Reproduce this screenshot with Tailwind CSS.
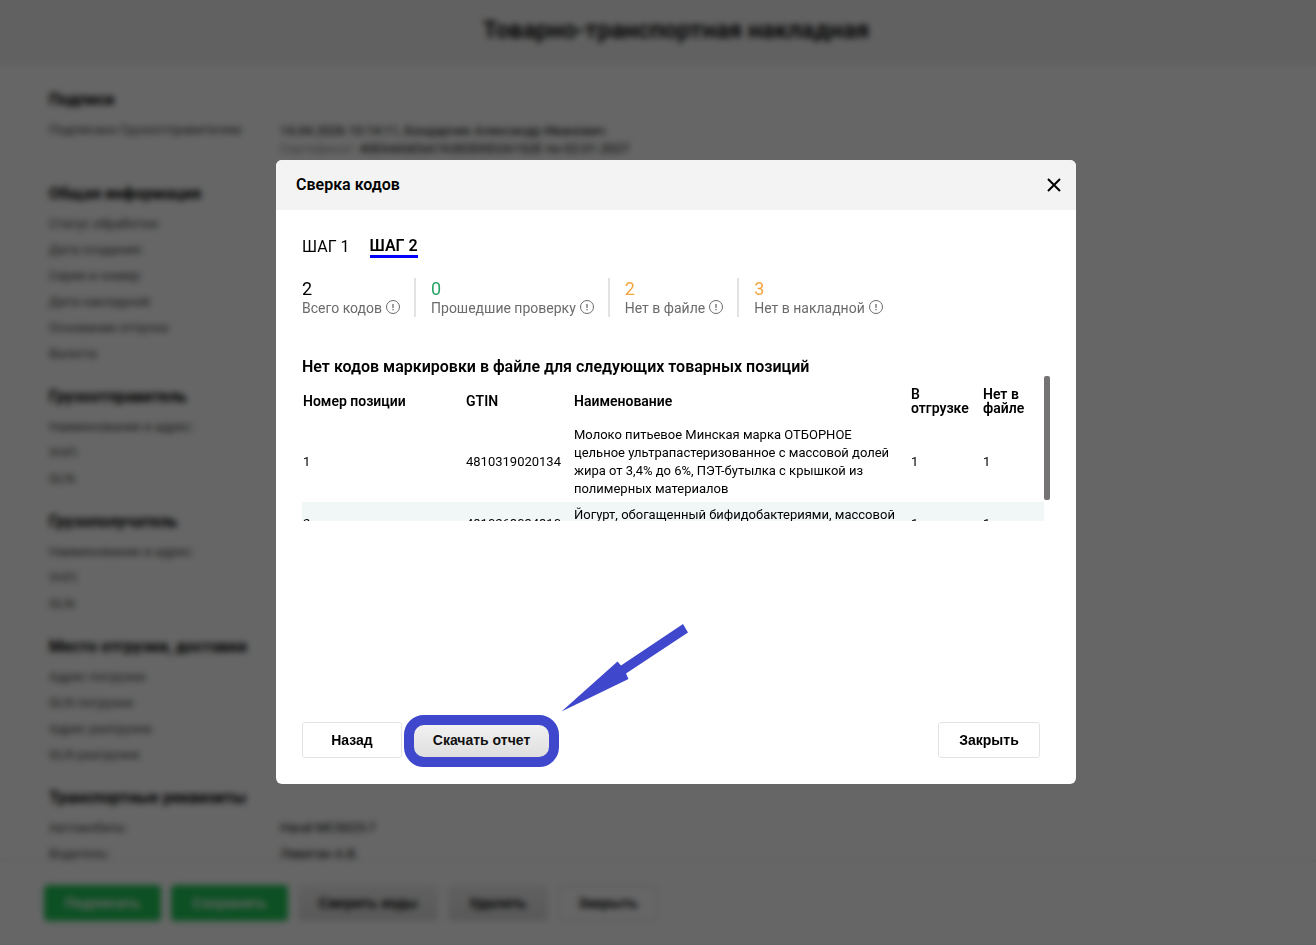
<!DOCTYPE html>
<html lang="ru">
<head>
  <meta charset="UTF-8" />
  <meta name="viewport" content="width=device-width, initial-scale=1" />
  <title>Товарно-транспортная накладная</title>
  <script src="https://cdn.jsdelivr.net/npm/@tailwindcss/browser@4"></script>
</head>
<body class="bg-white text-black font-['Roboto',sans-serif] overflow-hidden">

  <!-- Накладная -->
  <div class="flex flex-col h-screen" aria-hidden="true">
    <header class="flex-none flex items-center justify-center h-[66px] pl-9 pb-1.5 bg-[#f3f3f3]">
      <h1 class="text-2xl font-semibold">Товарно-транспортная накладная</h1>
    </header>

    <main class="flex-1 min-h-0 overflow-hidden pl-[49px] pt-5 flex flex-col gap-4 text-[13px] leading-[18px]">
      <section class="flex-none pb-[3px]">
        <h2 class="text-base leading-7 font-bold mb-[3px]">Подписи</h2>
        <dl class="grid grid-cols-[231px_1fr]">
          <dt class="py-1 text-[#444]">Подписано Грузоотправителем:</dt>
          <dd class="py-[5px]">14.04.2026 10:14:11, Бондарчик Александр Иванович<br /><span class="text-[#999]">Сертификат:</span> 40E64A6E6A7A3E0D0D2A1S2E по 02.01.2027</dd>
        </dl>
      </section>

      <section class="flex-none -mt-0.5">
        <h2 class="text-base leading-7 font-bold mb-[3px]">Общая информация</h2>
        <dl class="text-[#444]">
          <dt class="py-1">Статус обработки:</dt>
          <dt class="py-1">Дата создания:</dt>
          <dt class="py-1">Серия и номер:</dt>
          <dt class="py-1">Дата накладной:</dt>
          <dt class="py-1">Основание отпуска:</dt>
          <dt class="py-1">Валюта:</dt>
        </dl>
      </section>

      <section class="flex-none">
        <h2 class="text-base leading-7 font-bold mb-[3px]">Грузоотправитель</h2>
        <dl class="text-[#444]">
          <dt class="py-1">Наименование и адрес:</dt>
          <dt class="py-1">УНП:</dt>
          <dt class="py-1">GLN:</dt>
        </dl>
      </section>

      <section class="flex-none">
        <h2 class="text-base leading-7 font-bold mb-[3px]">Грузополучатель</h2>
        <dl class="text-[#444]">
          <dt class="py-1">Наименование и адрес:</dt>
          <dt class="py-1">УНП:</dt>
          <dt class="py-1">GLN:</dt>
        </dl>
      </section>

      <section class="flex-none">
        <h2 class="text-base leading-7 font-bold mb-[3px]">Место отгрузки, доставки</h2>
        <dl class="text-[#444]">
          <dt class="py-1">Адрес погрузки:</dt>
          <dt class="py-1">GLN погрузки:</dt>
          <dt class="py-1">Адрес разгрузки:</dt>
          <dt class="py-1">GLN разгрузки:</dt>
        </dl>
      </section>

      <section class="flex-none">
        <h2 class="text-base leading-7 font-bold mb-[3px]">Транспортные реквизиты</h2>
        <dl class="grid grid-cols-[231px_1fr]">
          <dt class="py-1 text-[#444]">Автомобиль:</dt>
          <dd class="py-1">Haval MC5025-7</dd>
          <dt class="py-1 text-[#444]">Водитель:</dt>
          <dd class="py-1">Левитан А.В.</dd>
        </dl>
      </section>
    </main>

    <footer class="flex-none flex items-start gap-2.5 h-[85px] pl-11 pt-6 bg-white border-t border-[#e3e3e3] font-['Liberation_Sans',sans-serif] text-sm font-bold">
      <button type="button" tabindex="-1" class="h-9 w-[117px] rounded bg-[#20c858] text-white">Подписать</button>
      <button type="button" tabindex="-1" class="h-9 w-[117px] rounded bg-[#20c858] text-white">Сохранить</button>
      <button type="button" tabindex="-1" class="h-9 w-[140px] rounded bg-linear-to-b from-[#f0f0f0] to-[#dedede]">Сверить коды</button>
      <button type="button" tabindex="-1" class="h-9 w-[100px] rounded bg-linear-to-b from-[#f0f0f0] to-[#dedede]">Удалить</button>
      <button type="button" tabindex="-1" class="h-9 w-[100px] rounded bg-white border border-[#d8d8d8]">Закрыть</button>
    </footer>
  </div>

  <!-- Окно сверки кодов -->
  <div class="fixed inset-0 flex items-center justify-center pl-9 pb-px bg-black/60 backdrop-blur-[3px]">
    <div role="dialog" aria-labelledby="dialogTitle" class="flex flex-col w-[800px] h-[624px] rounded-md bg-white overflow-hidden">
      <header class="flex items-center justify-between h-[50px] pl-5 pr-[15px] bg-[#f3f3f3]">
        <h2 id="dialogTitle" class="text-base font-semibold">Сверка кодов</h2>
        <button type="button" aria-label="Закрыть окно">
          <svg class="w-3.5 h-3.5" viewBox="0 0 14 14" fill="none" stroke="#000" stroke-width="2"><path d="M1 1l12 12M13 1L1 13" /></svg>
        </button>
      </header>

      <div class="flex-1 flex flex-col px-[26px] pt-[25px] pb-[26px]">
        <nav class="flex gap-5 text-base leading-6">
          <a href="#step1">ШАГ 1</a>
          <a href="#step2" class="h-[23px] leading-[22px] font-semibold border-b-3 border-[#0000ff]">ШАГ 2</a>
        </nav>

        <ul class="flex mt-[19px] text-sm leading-[18px] text-[#6b6b6b]">
          <li class="h-[39px] pr-3.5 mr-[15px] border-r-2 border-[#e3e3e3]">
            <div class="text-lg leading-[21px] text-black">2</div>
            <div class="flex items-center gap-1">Всего кодов
              <svg class="w-3.5 h-3.5 -mt-0.5" viewBox="0 0 14 14" fill="none" stroke="#6b6b6b"><circle cx="7" cy="7" r="6.5" /><path d="M7 4v4M7 9v1.2" stroke-width="1.3" /></svg>
            </div>
          </li>
          <li class="h-[39px] pr-3.5 mr-[15px] border-r-2 border-[#e3e3e3]">
            <div class="text-lg leading-[21px] text-[#27a567]">0</div>
            <div class="flex items-center gap-1">Прошедшие проверку
              <svg class="w-3.5 h-3.5 -mt-0.5" viewBox="0 0 14 14" fill="none" stroke="#6b6b6b"><circle cx="7" cy="7" r="6.5" /><path d="M7 4v4M7 9v1.2" stroke-width="1.3" /></svg>
            </div>
          </li>
          <li class="h-[39px] pr-3.5 mr-[15px] border-r-2 border-[#e3e3e3]">
            <div class="text-lg leading-[21px] text-[#f2a541]">2</div>
            <div class="flex items-center gap-1">Нет в файле
              <svg class="w-3.5 h-3.5 -mt-0.5" viewBox="0 0 14 14" fill="none" stroke="#6b6b6b"><circle cx="7" cy="7" r="6.5" /><path d="M7 4v4M7 9v1.2" stroke-width="1.3" /></svg>
            </div>
          </li>
          <li class="h-[39px]">
            <div class="text-lg leading-[21px] text-[#f2a541]">3</div>
            <div class="flex items-center gap-1">Нет в накладной
              <svg class="w-3.5 h-3.5 -mt-0.5" viewBox="0 0 14 14" fill="none" stroke="#6b6b6b"><circle cx="7" cy="7" r="6.5" /><path d="M7 4v4M7 9v1.2" stroke-width="1.3" /></svg>
            </div>
          </li>
        </ul>

        <h3 class="mt-10 text-base leading-[19px] font-semibold">Нет кодов маркировки в файле для следующих товарных позиций</h3>

        <div class="flex h-[145px]">
          <div class="w-[742px] overflow-y-auto [scrollbar-width:none]">
            <table class="w-full table-fixed text-left text-[13px] leading-[18px]">
              <colgroup>
                <col class="w-[163px]" />
                <col class="w-[108px]" />
                <col />
                <col class="w-[72px]" />
                <col class="w-[62px]" />
              </colgroup>
              <thead class="text-sm leading-[14px]">
                <tr class="h-[46px]">
                  <th class="pl-px pt-1 font-semibold">Номер позиции</th>
                  <th class="pl-px pt-1 font-semibold">GTIN</th>
                  <th class="pl-px pt-1 font-semibold">Наименование</th>
                  <th class="pl-px pt-1 pr-3 font-semibold">В отгрузке</th>
                  <th class="pl-px pt-1 pr-3 font-semibold">Нет в файле</th>
                </tr>
              </thead>
              <tbody>
                <tr>
                  <td class="pl-px py-1">1</td>
                  <td class="pl-px py-1">4810319020134</td>
                  <td class="pl-px py-1 pr-3.5">Молоко питьевое Минская марка ОТБОРНОЕ цельное ультрапастеризованное с массовой долей жира от 3,4% до 6%, ПЭТ-бутылка с крышкой из полимерных материалов</td>
                  <td class="pl-px py-1">1</td>
                  <td class="pl-px py-1">1</td>
                </tr>
                <tr class="bg-[#f1f6f6]">
                  <td class="pl-px py-1">2</td>
                  <td class="pl-px py-1">4810268034810</td>
                  <td class="pl-px py-1 pr-3.5">Йогурт, обогащенный бифидобактериями, массовой долей жира 2,5%</td>
                  <td class="pl-px py-1">1</td>
                  <td class="pl-px py-1">1</td>
                </tr>
              </tbody>
            </table>
          </div>
          <div class="w-1.5 h-31 rounded-xs bg-[#757373]"></div>
        </div>

        <div class="flex mt-auto mr-2.5 font-['Liberation_Sans',sans-serif] text-sm font-bold">
          <button type="button" class="w-[100px] h-9 rounded-[3px] border border-[#e3e3e3]">Назад</button>
          <div class="relative ml-2.5">
            <button type="button" class="w-[139px] h-9 rounded-[3px] bg-linear-to-b from-[#f3f3f3] to-[#dedede] text-[#111]">Скачать отчет</button>
            <!-- Рамка и стрелка-подсказка -->
            <div class="absolute -left-2 -top-[7px] w-[155px] h-[52px] rounded-[20px] border-10 border-[#3f48cc] pointer-events-none"></div>
            <svg class="absolute left-[149px] -top-[98px] w-32 h-[88px] pointer-events-none" viewBox="0 0 128 88" fill="#3f48cc"><path d="M0.5 87.5L56.5 37.5L60 41.5L122 0L127 8.5L65 49.5L67.5 55Z" /></svg>
          </div>
          <button type="button" class="ml-auto w-[102px] h-9 rounded-[3px] border border-[#e3e3e3]">Закрыть</button>
        </div>
      </div>
    </div>
  </div>

</body>
</html>
